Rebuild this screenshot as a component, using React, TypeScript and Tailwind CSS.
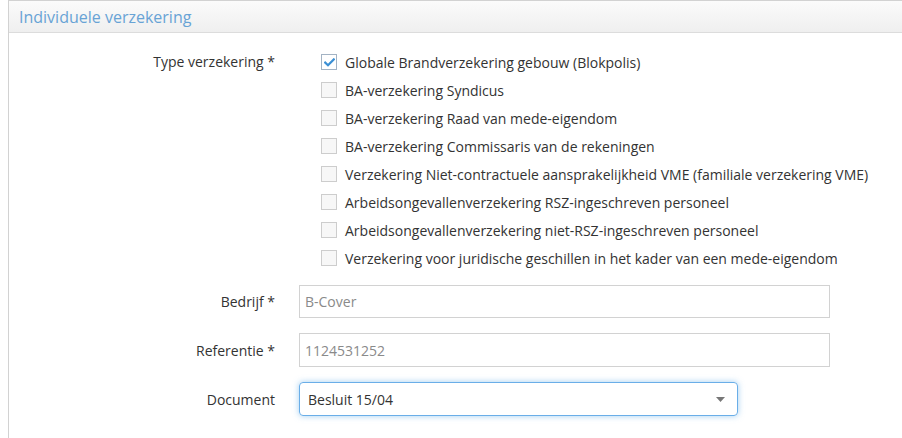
import React from 'react';

const TYPES = [
  { label: 'Globale Brandverzekering gebouw (Blokpolis)', checked: true },
  { label: 'BA-verzekering Syndicus', checked: false },
  { label: 'BA-verzekering Raad van mede-eigendom', checked: false },
  { label: 'BA-verzekering Commissaris van de rekeningen', checked: false },
  { label: 'Verzekering Niet-contractuele aansprakelijkheid VME (familiale verzekering VME)', checked: false },
  { label: 'Arbeidsongevallenverzekering RSZ-ingeschreven personeel', checked: false },
  { label: 'Arbeidsongevallenverzekering niet-RSZ-ingeschreven personeel', checked: false },
  { label: 'Verzekering voor juridische geschillen in het kader van een mede-eigendom', checked: false },
];

function Checkbox({ checked }: { checked: boolean }) {
  return (
    <span
      className={
        'flex items-center justify-center w-[16px] h-[16px] border shrink-0 ' +
        (checked ? 'border-[#a3b3c4] bg-white' : 'border-[#cdcdcd] bg-[#f7f7f7]')
      }
    >
      {checked && (
        <svg width="11" height="9" viewBox="0 0 11 9">
          <path d="M1.2 4.6 L4 7.3 L9.8 1.4" fill="none" stroke="#3b8fd4" strokeWidth="2.2" strokeLinecap="square" />
        </svg>
      )}
    </span>
  );
}

function Row({ label, children, className = '' }: { label: string; children: React.ReactNode; className?: string }) {
  return (
    <div className={'flex ' + className}>
      <div className="w-[266px] shrink-0 text-right">{label}</div>
      <div className="ml-[24px] flex-1">{children}</div>
    </div>
  );
}

export default function App() {
  return (
    <div
      className="w-[902px] h-[438px] overflow-hidden bg-white text-[14px] text-[#333]"
      style={{ fontFamily: '"Open Sans", "Liberation Sans", sans-serif' }}
    >
      <div className="ml-[8px] w-[920px] h-[460px] border-l border-t border-[#d2d2d2]">
        {/* Header */}
        <div className="h-[32px] flex items-center pl-[10px] border-b border-[#dcdcdc] bg-gradient-to-b from-[#fbfbfb] to-[#efefef]">
          <span className="text-[16px] text-[#68a3d5]">Individuele verzekering</span>
        </div>

        {/* Body */}
        <div className="pt-[15px]">
          <div className="flex">
            <div className="w-[266px] shrink-0 text-right leading-[28px]">Type verzekering *</div>
            <div className="ml-[46px] flex flex-col">
              {TYPES.map(t => (
                <label key={t.label} className="h-[28px] flex items-center gap-[8px] whitespace-nowrap">
                  <Checkbox checked={t.checked} />
                  <span>{t.label}</span>
                </label>
              ))}
            </div>
          </div>

          <Row label="Bedrijf *" className="mt-[13px] items-center">
            <div className="w-[531px] h-[33px] border border-[#d2d2d2] flex items-center pl-[5px] text-[#8a8a8a]">
              B-Cover
            </div>
          </Row>

          <Row label="Referentie *" className="mt-[15px] items-center">
            <div className="w-[531px] h-[34px] border border-[#d2d2d2] flex items-center pl-[5px] text-[#8a8a8a]">
              1124531252
            </div>
          </Row>

          <Row label="Document" className="mt-[15px] items-center">
            <div className="w-[439px] h-[34px] border border-[#6aaee8] rounded-[4px] shadow-[0_0_6px_rgba(102,175,233,0.6)] flex items-center justify-between pl-[8px] pr-[12px]">
              <span>Besluit 15/04</span>
              <svg width="9" height="5" viewBox="0 0 9 5">
                <path d="M0 0 H9 L4.5 5 Z" fill="#777" />
              </svg>
            </div>
          </Row>
        </div>
      </div>
    </div>
  );
}
